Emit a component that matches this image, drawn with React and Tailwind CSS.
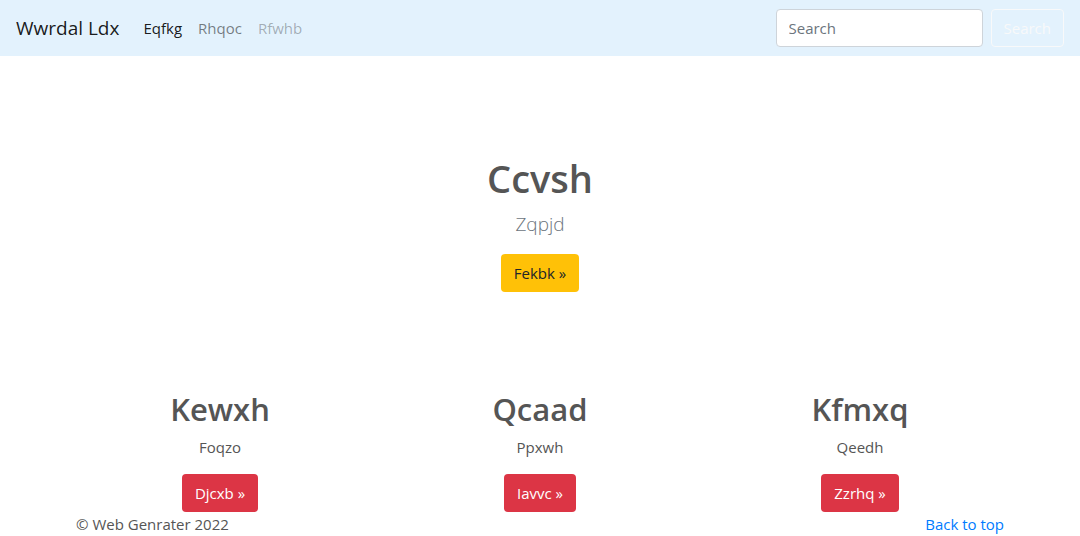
import React from 'react';

const font = { fontFamily: '"Open Sans", "Noto Sans", sans-serif' };

function Feature({ title, text, label }) {
  return (
    <div className="flex flex-col items-center text-center">
      <h2 className="text-[31px] font-semibold leading-[38px] text-[#555555] mb-[7px]">{title}</h2>
      <p className="text-[15px] leading-6 text-[#555555] mb-[15px]">{text}</p>
      <a href="#" className="h-[38px] px-[13px] flex items-center rounded bg-[#dc3545] text-white text-[15px]">
        {label} »
      </a>
    </div>
  );
}

export default function App() {
  return (
    <div className="min-h-screen bg-white" style={font}>
      <nav className="h-14 bg-[#e3f2fd] flex items-center px-4">
        <a href="#" className="text-[19px] text-black/90 mr-6">Wwrdal Ldx</a>
        <div className="flex items-center gap-4 text-[15px]">
          <a href="#" className="text-black/90">Eqfkg</a>
          <a href="#" className="text-black/50">Rhqoc</a>
          <span className="text-black/30">Rfwhb</span>
        </div>
        <div className="ml-auto flex items-center gap-2">
          <input
            placeholder="Search"
            className="w-[207px] h-[38px] px-3 rounded border border-[#ced4da] bg-white text-[15px] placeholder:text-[#6c757d] outline-none"
          />
          <button className="h-[38px] px-3 rounded border border-[#f8f9fa] text-[#f8f9fa] text-[15px]">Search</button>
        </div>
      </nav>

      <section className="pt-[98px] flex flex-col items-center text-center">
        <h1 className="text-[38px] font-semibold leading-[48px] text-[#555555] mb-[7px]">Ccvsh</h1>
        <p className="text-[19px] font-light leading-[30px] text-[#6c757d] mb-[15px]">Zqpjd</p>
        <a href="#" className="h-[38px] px-[13px] flex items-center rounded bg-[#ffc107] text-[#212529] text-[15px]">
          Fekbk »
        </a>
      </section>

      <div className="w-[960px] mx-auto mt-[98px] grid grid-cols-3">
        <Feature title="Kewxh" text="Foqzo" label="Djcxb" />
        <Feature title="Qcaad" text="Ppxwh" label="Iavvc" />
        <Feature title="Kfmxq" text="Qeedh" label="Zzrhq" />
      </div>

      <footer className="w-[960px] mx-auto px-4 flex justify-between text-[15px] leading-6 text-[#555555]">
        <p>© Web Genrater 2022</p>
        <a href="#" className="text-[#007bff]">Back to top</a>
      </footer>
    </div>
  );
}
